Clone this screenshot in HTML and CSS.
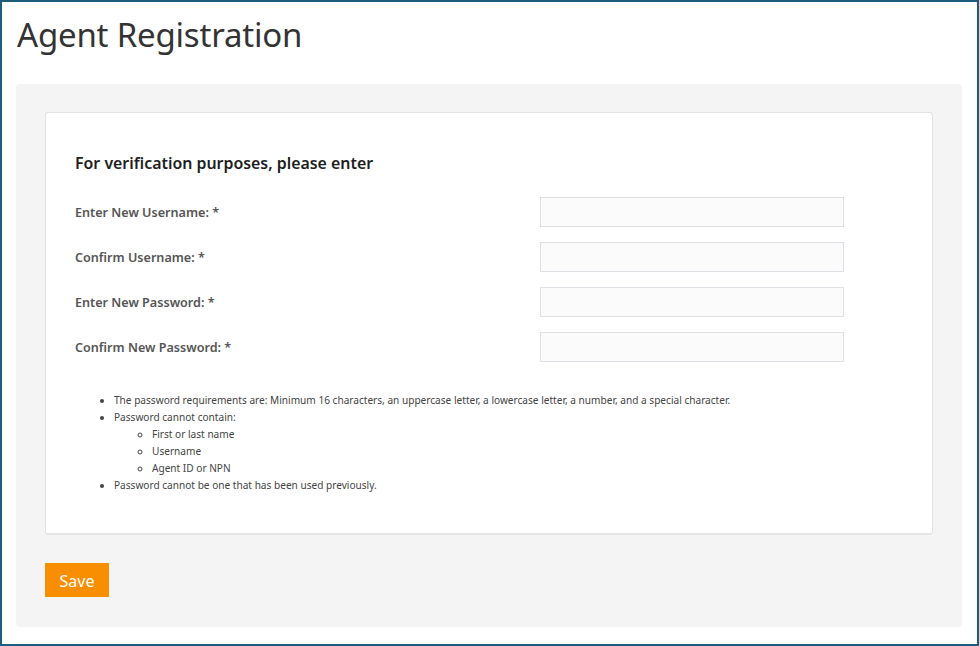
FILE: index.html
```html
<!DOCTYPE html>
<html lang="en">
<head>
<meta charset="utf-8">
<title>Agent Registration</title>
<link rel="stylesheet" href="styles.css">
</head>
<body>
<div class="frame">
  <h1 class="title">Agent Registration</h1>
  <div class="panel">
    <div class="card">
      <h2 class="heading">For verification purposes, please enter</h2>
      <div class="rows">
        <div class="row"><label class="label">Enter New Username: *</label><input class="field" type="text"></div>
        <div class="row"><label class="label">Confirm Username: *</label><input class="field" type="text"></div>
        <div class="row"><label class="label">Enter New Password: *</label><input class="field" type="password"></div>
        <div class="row"><label class="label">Confirm New Password: *</label><input class="field" type="password"></div>
      </div>
      <ul class="rules">
        <li>The password requirements are: Minimum 16 characters, an uppercase letter, a lowercase letter, a number, and a special character.</li>
        <li>Password cannot contain:
          <ul class="sub">
            <li>First or last name</li>
            <li>Username</li>
            <li>Agent ID or NPN</li>
          </ul>
        </li>
        <li>Password cannot be one that has been used previously.</li>
      </ul>
    </div>
    <button class="save" type="button">Save</button>
  </div>
</div>
</body>
</html>
```
FILE: styles.css
```css
html, body {
  margin: 0;
  padding: 0;
  background: #fff;
}
.frame {
  box-sizing: border-box;
  width: 979px;
  height: 646px;
  border: 2px solid #1d5d7e;
  padding: 0 15px 0 14px;
  font-family: "Noto Sans", "Open Sans", sans-serif;
  color: #333;
}
.title {
  margin: 0;
  padding: 11px 0 0 1px;
  height: 82px;
  box-sizing: border-box;
  font-size: 33px;
  font-weight: 400;
  line-height: 44px;
  color: #333;
  letter-spacing: -0.2px;
}
.panel {
  background: #f4f4f4;
  border-radius: 4px;
  padding: 28px 29px 30px 29px;
  height: 543px;
  box-sizing: border-box;
}
.card {
  background: #fff;
  border: 1px solid #e2e2e2;
  border-bottom: 2px solid #e6e6e6;
  border-radius: 3px;
  height: 423px;
  box-sizing: border-box;
  padding: 38px 29px 0 29px;
}
.heading {
  margin: 0;
  font-size: 15.9px;
  font-weight: 600;
  line-height: 24px;
  color: #1e1e1e;
}
.rows {
  margin-top: 22px;
  display: flex;
  flex-direction: column;
  gap: 15px;
}
.row {
  display: flex;
  align-items: center;
  height: 30px;
}
.label {
  width: 465px;
  font-size: 12.6px;
  font-weight: 600;
  color: #555;
}
.field {
  box-sizing: border-box;
  width: 304px;
  height: 30px;
  margin: 0;
  border: 1px solid #dde0e4;
  background: #fbfbfb;
  border-radius: 0;
  outline: none;
}
.rules {
  margin: 30px 0 0 0;
  padding-left: 39px;
  font-size: 10.1px;
  line-height: 17px;
  color: #444;
}
.sub {
  margin: 0;
  padding-left: 38px;
  list-style: circle;
}
.save {
  margin-top: 28px;
  width: 64px;
  height: 34px;
  border: none;
  background: #f98e00;
  color: #fff;
  font-family: "Noto Sans", "Open Sans", sans-serif;
  font-size: 16px;
  line-height: 36px;
  padding: 0;
  cursor: pointer;
}
```
